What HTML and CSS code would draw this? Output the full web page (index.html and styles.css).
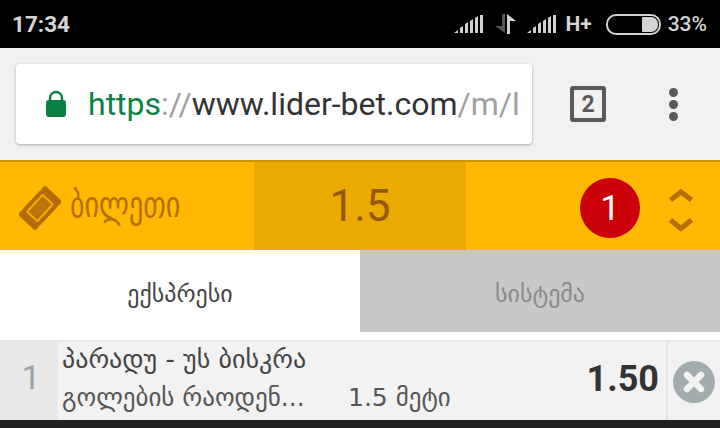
FILE: index.html
```html
<!DOCTYPE html>
<html lang="ka">
<head>
    <meta charset="UTF-8">
    <meta name="viewport" content="width=device-width, initial-scale=1.0">
    <title>ბილეთი</title>
    <link rel="stylesheet" href="styles.css">
</head>
<body>
    <div class="status-bar">
        <span class="clock">17:34</span>
        <div class="status-icons">
            <svg class="signal" width="32" height="20" viewBox="0 0 32 20">
                <path d="M1 19l4-3v3zM7 19v-5l3-2v7zM12 19v-9l3-2v11zM17 19v-12l3-2v14zM22 19V4l3-2v17z" fill="#d0d0d0"/>
                <path d="M27 19V1h3v18z" fill="#d0d0d0"/>
            </svg>
            <svg class="data" width="22" height="22" viewBox="0 0 22 22">
                <path d="M7 1h3v19L0 13h7z" fill="#555"/>
                <path d="M12 21V1l9 7h-6v13z" fill="#cfcfcf"/>
            </svg>
            <svg class="signal" width="32" height="20" viewBox="0 0 32 20">
                <path d="M1 19l4-3v3zM7 19v-5l3-2v7zM12 19v-9l3-2v11zM17 19v-12l3-2v14zM22 19V4l3-2v17z" fill="#d0d0d0"/>
                <path d="M27 19V1h3v18z" fill="#d0d0d0"/>
            </svg>
            <span class="net">H+</span>
            <div class="battery"><div class="battery-level"></div></div>
            <span class="percent">33%</span>
        </div>
    </div>

    <div class="toolbar">
        <div class="url-box">
            <svg class="lock" width="22" height="28" viewBox="0 0 22 28">
                <path d="M5 12V8a6 6 0 0 1 12 0v4" fill="none" stroke="#0b8043" stroke-width="2.4"/>
                <rect x="1" y="10" width="20" height="17" rx="3" fill="#0b8043"/>
            </svg>
            <div class="url"><span class="green">https</span><span class="gray">://</span>www.lider-bet.com<span class="gray">/m/l</span></div>
        </div>
        <div class="tab-count">2</div>
        <div class="menu-dots"><i></i><i></i><i></i></div>
    </div>

    <div class="ticket-bar">
        <div class="ticket-left">
            <svg class="ticket-icon" width="42" height="44" viewBox="-21 -22 42 44">
                <g transform="rotate(-47)">
                    <path d="M-21-13h5a4 4 0 0 0 4 0H12a4 4 0 0 0 4 0h5v26h-5a4 4 0 0 0-4 0h-24a4 4 0 0 0-4 0h-5z" fill="#b56a08" transform="scale(.95 .92)"/>
                    <rect x="-11.5" y="-7" width="23" height="14" rx="1" fill="#bb7206" stroke="#efa903" stroke-width="2.2"/>
                </g>
            </svg>
            <span class="ticket-title">ბილეთი</span>
        </div>
        <div class="ticket-odds">1.5</div>
        <div class="ticket-right">
            <div class="badge">1</div>
            <svg class="chevrons" width="28" height="50" viewBox="0 0 28 50">
                <path d="M3.500 17l10.500-8 10.500 8" fill="none" stroke="#b56f06" stroke-width="5"/>
                <path d="M3.500 37l10.500 8.500 10.500-8.500" fill="none" stroke="#b56f06" stroke-width="5"/>
            </svg>
        </div>
    </div>

    <div class="tabs">
        <div class="tab active">ექსპრესი</div>
        <div class="tab">სისტემა</div>
    </div>

    <div class="bet-row">
        <div class="bet-num">1</div>
        <div class="bet-info">
            <div class="bet-match">პარადუ - უს ბისკრა</div>
            <div class="bet-detail">
                <span class="bet-market">გოლების რაოდენ...</span>
                <span>1.5 მეტი</span>
            </div>
        </div>
        <div class="bet-odd">1.50</div>
        <div class="bet-close">
            <svg width="42" height="42" viewBox="0 0 42 42">
                <circle cx="21" cy="21" r="21" fill="#a2acaf"/>
                <path d="M14 14l14 14M28 14L14 28" stroke="#f2f2f2" stroke-width="6.5" stroke-linecap="round"/>
            </svg>
        </div>
    </div>
    <div class="nav-strip"></div>
</body>
</html>
```

FILE: styles.css
```css
html, body {
    margin: 0;
    padding: 0;
}
body {
    width: 720px;
    height: 428px;
    overflow: hidden;
    background: white;
    font-family: Roboto, "DejaVu Sans", sans-serif;
}
.status-bar {
    height: 48px;
    background: #000;
    color: #d4d4d4;
    display: flex;
    align-items: center;
    justify-content: space-between;
    padding: 0 13px 0 12px;
    box-sizing: border-box;
}
.clock {
    font-size: 22.500px;
    font-weight: 700;
}
.status-icons {
    display: flex;
    align-items: center;
}
.status-icons .data {
    margin: 0 9px 0 10px;
}
.net {
    font-size: 21px;
    font-weight: 700;
    margin: 0 14px 0 7px;
}
.battery {
    width: 49px;
    height: 15px;
    border: 2px solid #d4d4d4;
    border-radius: 10px;
    padding: 1px;
    display: flex;
    justify-content: flex-end;
    margin-right: 7px;
}
.battery-level {
    width: 16px;
    background: #d4d4d4;
    border-radius: 1px 7px 7px 1px;
}
.percent {
    font-size: 21px;
    font-weight: 500;
}
.toolbar {
    height: 112px;
    box-sizing: border-box;
    background: #f1f1f1;
    padding: 16px 0;
    display: flex;
    align-items: center;
}
.url-box {
    width: 516px;
    height: 80px;
    margin-left: 16px;
    background: white;
    border-radius: 4px;
    box-shadow: 0 1px 3px rgba(0, 0, 0, 0.3);
    display: flex;
    align-items: center;
    box-sizing: border-box;
    padding-left: 29px;
    overflow: hidden;
}
.url {
    margin-left: 21px;
    font-size: 32px;
    color: #333;
    white-space: nowrap;
}
.green {
    color: #0b8043;
}
.gray {
    color: #a0a0a0;
}
.tab-count {
    width: 28px;
    height: 28px;
    margin-left: 38px;
    border: 4px solid #5a5a5a;
    border-radius: 3px;
    color: #5a5a5a;
    font-size: 23px;
    font-weight: 700;
    display: flex;
    align-items: center;
    justify-content: center;
}
.menu-dots {
    margin-left: 63px;
    display: flex;
    flex-direction: column;
    gap: 3px;
}
.menu-dots i {
    display: block;
    width: 9px;
    height: 9px;
    border-radius: 50%;
    background: #5a5a5a;
}
.ticket-bar {
    height: 90px;
    box-sizing: border-box;
    background: #ffb900;
    border-top: 2px solid #c99400;
    display: flex;
    color: #a8620a;
}
.ticket-left {
    width: 254px;
    box-sizing: border-box;
    padding: 4px 0 0 19px;
    display: flex;
    align-items: center;
}
.ticket-title {
    margin: 0 0 7px 9px;
    font-family: "DejaVu Sans", sans-serif;
    font-size: 37px;
    color: #b56f06;
    transform: scaleX(.76);
    transform-origin: left center;
}
.ticket-odds {
    width: 212px;
    background: #ebaa00;
    font-size: 44px;
    color: #94580a;
    display: flex;
    align-items: center;
    justify-content: center;
}
.ticket-right {
    flex: 1;
    display: flex;
    align-items: center;
    justify-content: flex-end;
    padding: 4px 25px 0 0;
}
.badge {
    width: 60px;
    height: 60px;
    border-radius: 50%;
    background: #cc0008;
    color: white;
    font-size: 35px;
    display: flex;
    align-items: center;
    justify-content: center;
    margin-right: 27px;
}
.tabs {
    height: 82px;
    box-sizing: border-box;
    display: flex;
    font-family: "DejaVu Sans", sans-serif;
    font-size: 24px;
}
.tab {
    width: 360px;
    padding-top: 6px;
    box-sizing: border-box;
    background: #c8c8c8;
    color: #8a8a8a;
    display: flex;
    align-items: center;
    justify-content: center;
}
.tab.active {
    background: white;
    color: #444;
}
.bet-row {
    height: 80px;
    margin-top: 8px;
    box-sizing: border-box;
    border-top: 2px solid #e6eaea;
    background: #f2f2f2;
    display: flex;
}
.bet-num {
    width: 58px;
    background: #e8e8e8;
    color: #a0a0a0;
    font-size: 33px;
    display: flex;
    align-items: center;
    justify-content: center;
    padding: 0 0 8px 4px;
    box-sizing: border-box;
}
.bet-info {
    width: 500px;
    padding: 0 0 0 4px;
    box-sizing: border-box;
    font-family: "DejaVu Sans", sans-serif;
    color: #444;
}
.bet-match {
    font-size: 26px;
    line-height: 35px;
}
.bet-detail {
    font-size: 25px;
    line-height: 41px;
    display: flex;
    color: #555;
}
.bet-market {
    width: 286px;
}
.bet-odd {
    width: 108px;
    font-size: 36px;
    font-weight: 700;
    color: #333;
    display: flex;
    align-items: center;
    justify-content: flex-end;
    padding: 0 7px 4px 0;
    box-sizing: border-box;
}
.bet-close {
    flex: 1;
    border-left: 2px solid #e0e6e6;
    display: flex;
    align-items: center;
    justify-content: center;
    padding-top: 2px;
}
.nav-strip {
    height: 8px;
    background: #222;
}
```
